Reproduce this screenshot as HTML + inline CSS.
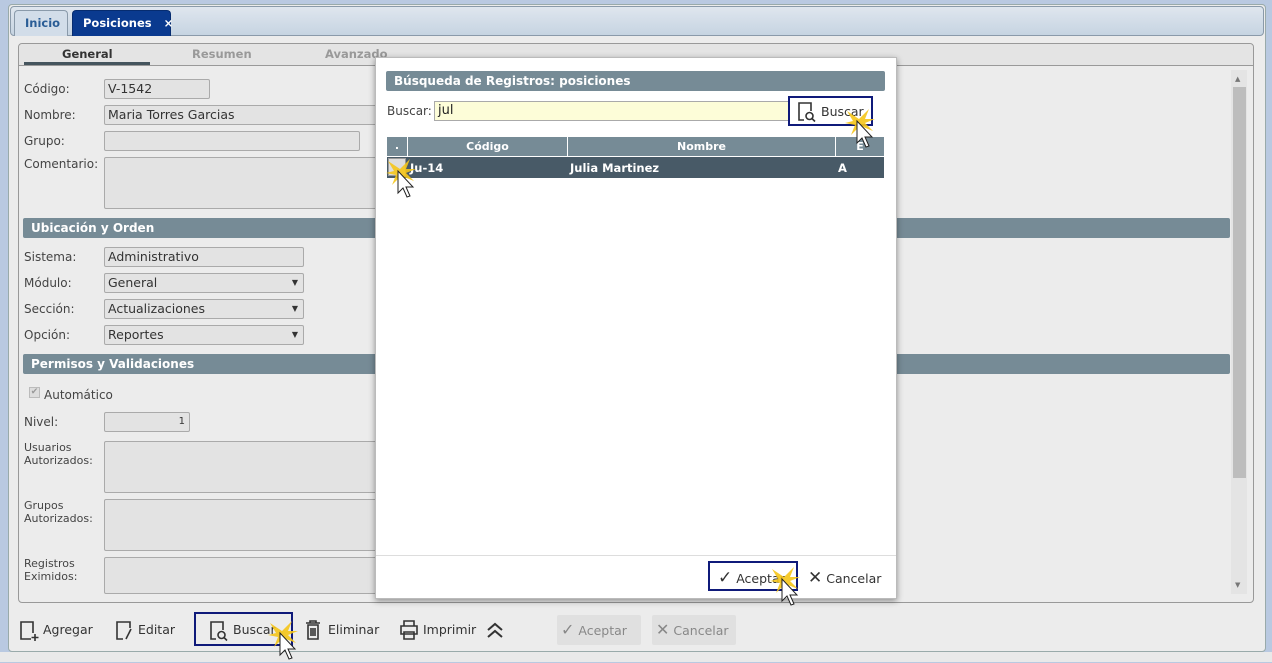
<!DOCTYPE html>
<html><head><meta charset="utf-8"><style>
*{box-sizing:border-box;margin:0;padding:0}
body{width:1272px;height:662px;overflow:hidden;background:#b9c9e1;font-family:"DejaVu Sans","Liberation Sans",sans-serif;font-size:12px;color:#333;position:relative}
.a{position:absolute}
.main{left:8px;top:4px;width:1258px;height:648px;background:#ececec;border:1px solid #9aa;border-radius:4px}
.tabbar{left:10px;top:6px;width:1254px;height:30px;background:linear-gradient(#dfe6ee,#c6d4e2);border:1px solid #8a9aaa;border-radius:4px}
.tab{top:10px;height:26px;border:1px solid #8a9aaa;border-bottom:none;border-radius:4px 4px 0 0;font-weight:bold;font-size:11.5px;line-height:24px;padding:0 10px;white-space:nowrap}
.inner{left:18px;top:43px;width:1236px;height:560px;border:1px solid #999;border-radius:4px;background:#ececec}
.lbl{left:24px;font-size:12px;color:#444}
.inp{background:#e3e3e3;border:1px solid #aaa;border-radius:2px;font-size:12.5px;padding-left:3px;line-height:18px;color:#333}
.sec{left:23px;width:1207px;height:20px;background:#768b96;color:#fff;font-weight:bold;font-size:12px;line-height:20px;padding-left:8px;border-radius:2px}
.sel:after{content:"▼";position:absolute;right:5px;top:0;font-size:8px;color:#333}
.btn{top:614px;height:32px;font-size:12.5px;line-height:32px;color:#333}
</style></head><body>
<div class="a" style="left:0;top:652px;width:1272px;height:10px;background:#e9e9e9"></div>
<div class="a main"></div>
<div class="a tabbar"></div>
<div class="a tab" style="left:14px;width:54px;background:#d2dde9;color:#2a5d96">Inicio</div>
<div class="a tab" style="left:72px;width:99px;background:#0a3a8f;color:#fff;border-color:#062c70;padding:0 0 0 10px">Posiciones <span style="margin-left:8px">×</span></div>
<div class="a inner"></div>
<div class="a" style="left:19px;top:44px;width:1234px;height:22px;background:#e4e4e4;border-bottom:1px solid #999;border-radius:4px 4px 0 0"></div>
<div class="a" style="left:62px;top:47px;font-weight:bold;font-size:11.5px;color:#333">General</div>
<div class="a" style="left:24px;top:62px;width:126px;height:3px;background:#45555e"></div>
<div class="a" style="left:192px;top:47px;font-weight:bold;font-size:11.5px;color:#999">Resumen</div>
<div class="a" style="left:325px;top:47px;font-weight:bold;font-size:11.5px;color:#999">Avanzado</div>
<div class="a" style="left:1231px;top:70px;width:16px;height:524px;background:#e4e4e4"></div>
<div class="a" style="left:1233px;top:87px;width:13px;height:391px;background:#bdbdbd"></div>
<div class="a" style="left:1235px;top:75px;font-size:7px;color:#777">▲</div>
<div class="a" style="left:1235px;top:581px;font-size:7px;color:#777">▼</div>

<div class="a lbl" style="top:82px">Código:</div>
<div class="a inp" style="left:104px;top:79px;width:106px;height:20px">V-1542</div>
<div class="a lbl" style="top:108px">Nombre:</div>
<div class="a inp" style="left:104px;top:105px;width:290px;height:20px">Maria Torres Garcias</div>
<div class="a lbl" style="top:134px">Grupo:</div>
<div class="a inp" style="left:104px;top:131px;width:256px;height:20px"></div>
<div class="a lbl" style="top:157px">Comentario:</div>
<div class="a inp" style="left:104px;top:157px;width:290px;height:52px"></div>
<div class="a sec" style="top:218px">Ubicación y Orden</div>
<div class="a lbl" style="top:250px">Sistema:</div>
<div class="a inp" style="left:104px;top:247px;width:200px;height:20px">Administrativo</div>
<div class="a lbl" style="top:276px">Módulo:</div>
<div class="a inp sel" style="left:104px;top:273px;width:200px;height:20px">General</div>
<div class="a lbl" style="top:302px">Sección:</div>
<div class="a inp sel" style="left:104px;top:299px;width:200px;height:20px">Actualizaciones</div>
<div class="a lbl" style="top:328px">Opción:</div>
<div class="a inp sel" style="left:104px;top:325px;width:200px;height:20px">Reportes</div>
<div class="a sec" style="top:354px">Permisos y Validaciones</div>
<div class="a" style="left:29px;top:387px;width:11px;height:11px;background:#ddd;border:1px solid #bbb;font-size:9px;line-height:9px;color:#999;text-align:center">✔</div>
<div class="a" style="left:44px;top:388px;font-size:12px;color:#444">Automático</div>
<div class="a lbl" style="top:415px">Nivel:</div>
<div class="a inp" style="left:104px;top:412px;width:86px;height:20px;text-align:right;padding-right:4px;font-size:10px">1</div>
<div class="a lbl" style="top:441px;line-height:13px;font-size:11px">Usuarios<br>Autorizados:</div>
<div class="a inp" style="left:104px;top:441px;width:290px;height:52px"></div>
<div class="a lbl" style="top:499px;line-height:13px;font-size:11px">Grupos<br>Autorizados:</div>
<div class="a inp" style="left:104px;top:499px;width:290px;height:52px"></div>
<div class="a lbl" style="top:557px;line-height:13px;font-size:11px">Registros<br>Eximidos:</div>
<div class="a inp" style="left:104px;top:557px;width:290px;height:37px"></div>

<svg class="a" style="left:18px;top:619px" width="22" height="24" viewBox="0 0 22 24" fill="none" stroke="#333" stroke-width="1.6"><path d="M13 20H3V3h12v11"/><path d="M17 15v7M13.5 18.5h7"/></svg>
<div class="a btn" style="left:43px">Agregar</div>
<svg class="a" style="left:114px;top:619px" width="22" height="24" viewBox="0 0 22 24" fill="none" stroke="#333" stroke-width="1.6"><path d="M9 20H3V3h13v6"/><path d="M17 10l-5 10"/></svg>
<div class="a btn" style="left:138px">Editar</div>
<div class="a" style="left:194px;top:612px;width:99px;height:34px;border:2px solid #0f1a7a"></div>
<svg class="a" style="left:208px;top:619px" width="22" height="24" viewBox="0 0 22 24" fill="none" stroke="#333" stroke-width="1.6"><path d="M8 20H3V3h12v8"/><circle cx="13.5" cy="16" r="3.5"/><path d="M16 18.5l3 3"/></svg>
<div class="a btn" style="left:233px">Buscar</div>
<svg class="a" style="left:304px;top:619px" width="18" height="22" viewBox="0 0 18 22" fill="none" stroke="#333" stroke-width="1.6"><path d="M2 4h14M6 4V2h6v2M4 6h10v14H4zM7 9v8M9 9v8M11 9v8"/></svg>
<div class="a btn" style="left:328px">Eliminar</div>
<svg class="a" style="left:398px;top:619px" width="22" height="22" viewBox="0 0 22 22" fill="none" stroke="#333" stroke-width="1.6"><path d="M6 7V2h10v5M3 7h16v8H3zM6 13h10v7H6z"/></svg>
<div class="a btn" style="left:423px">Imprimir</div>
<svg class="a" style="left:485px;top:621px" width="20" height="18" viewBox="0 0 20 18" fill="none" stroke="#333" stroke-width="2"><path d="M3 9l7-6 7 6M3 16l7-6 7 6"/></svg>
<div class="a" style="left:557px;top:615px;width:84px;height:30px;background:#e0e0e0;border-radius:2px"></div>
<div class="a btn" style="left:561px;color:#888;font-size:12.5px"><span style="font-size:16px">✓</span> Aceptar</div>
<div class="a" style="left:652px;top:615px;width:84px;height:30px;background:#e0e0e0;border-radius:2px"></div>
<div class="a btn" style="left:656px;color:#888"><span style="font-size:16px">✕</span> Cancelar</div>

<div class="a" style="left:375px;top:57px;width:522px;height:542px;background:#fff;border:1px solid #bbb;box-shadow:0 2px 6px rgba(0,0,0,.4)"></div>
<div class="a" style="left:386px;top:71px;width:499px;height:20px;background:#768b96;color:#fff;font-weight:bold;font-size:12px;line-height:20px;padding-left:8px;border-radius:2px">Búsqueda de Registros: posiciones</div>
<div class="a" style="left:387px;top:104px;font-size:12px;color:#444">Buscar:</div>
<div class="a" style="left:434px;top:101px;width:360px;height:20px;background:#fdfdd8;border:1px solid #aaa;font-size:13px;line-height:18px;padding-left:3px;color:#222">jul</div>
<div class="a" style="left:788px;top:96px;width:85px;height:30px;background:#fff;border:2px solid #0f1a7a"></div>
<svg class="a" style="left:796px;top:100px" width="22" height="24" viewBox="0 0 22 24" fill="none" stroke="#333" stroke-width="1.6"><path d="M8 20H3V3h12v8"/><circle cx="13.5" cy="16" r="3.5"/><path d="M16 18.5l3 3"/></svg>
<div class="a" style="left:821px;top:104px;font-size:12.5px;color:#333">Buscar</div>
<div class="a" style="left:387px;top:137px;width:497px;height:19px;background:#768b96"></div>
<div class="a" style="left:387px;top:137px;width:21px;height:19px;color:#fff;font-weight:bold;font-size:11px;text-align:center;line-height:17px;border-right:1px solid #fff">.</div>
<div class="a" style="left:408px;top:137px;width:160px;height:19px;color:#fff;font-weight:bold;font-size:11px;text-align:center;line-height:19px;border-right:1px solid #fff">Código</div>
<div class="a" style="left:568px;top:137px;width:268px;height:19px;color:#fff;font-weight:bold;font-size:11px;text-align:center;line-height:19px;border-right:1px solid #fff">Nombre</div>
<div class="a" style="left:836px;top:137px;width:48px;height:19px;color:#fff;font-weight:bold;font-size:11px;text-align:center;line-height:19px">E</div>
<div class="a" style="left:387px;top:157px;width:497px;height:21px;background:#485a67"></div>
<div class="a" style="left:388px;top:158px;width:18px;height:18px;background:#ddd;border:1px solid #999"></div>
<div class="a" style="left:410px;top:161px;color:#fff;font-size:11.5px;font-weight:bold">Ju-14</div>
<div class="a" style="left:570px;top:161px;color:#fff;font-size:11.5px;font-weight:bold">Julia Martinez</div>
<div class="a" style="left:838px;top:161px;color:#fff;font-size:11.5px;font-weight:bold">A</div>
<div class="a" style="left:376px;top:555px;width:520px;height:1px;background:#ddd"></div>
<div class="a" style="left:708px;top:561px;width:90px;height:30px;border:2px solid #0f1a7a"></div>
<div class="a" style="left:718px;top:568px;font-size:12.5px;color:#333"><span style="font-size:17px">✓</span> Aceptar</div>
<div class="a" style="left:808px;top:568px;font-size:12.5px;color:#333"><span style="font-size:17px">✕</span> Cancelar</div>

<svg class="a" style="left:386px;top:155px" width="36" height="46" viewBox="0 0 36 46"><path d="M14 14L2 6l6 10-8 2 10 2-4 10 8-8 3 10 1-10 10 4-8-8 10-4-10 0 4-10z" fill="#f5c518" opacity=".9"/><path d="M12 16v22l5-5 4 9 3-1-4-9h7z" fill="#fff" stroke="#222"/></svg>
<svg class="a" style="left:845px;top:105px" width="36" height="46" viewBox="0 0 36 46"><path d="M14 14L2 6l6 10-8 2 10 2-4 10 8-8 3 10 1-10 10 4-8-8 10-4-10 0 4-10z" fill="#f5c518" opacity=".9"/><path d="M12 16v22l5-5 4 9 3-1-4-9h7z" fill="#fff" stroke="#222"/></svg>
<svg class="a" style="left:770px;top:563px" width="36" height="46" viewBox="0 0 36 46"><path d="M14 14L2 6l6 10-8 2 10 2-4 10 8-8 3 10 1-10 10 4-8-8 10-4-10 0 4-10z" fill="#f5c518" opacity=".9"/><path d="M12 16v22l5-5 4 9 3-1-4-9h7z" fill="#fff" stroke="#222"/></svg>
<svg class="a" style="left:268px;top:617px" width="36" height="46" viewBox="0 0 36 46"><path d="M14 14L2 6l6 10-8 2 10 2-4 10 8-8 3 10 1-10 10 4-8-8 10-4-10 0 4-10z" fill="#f5c518" opacity=".9"/><path d="M12 16v22l5-5 4 9 3-1-4-9h7z" fill="#fff" stroke="#222"/></svg>
</body></html>
